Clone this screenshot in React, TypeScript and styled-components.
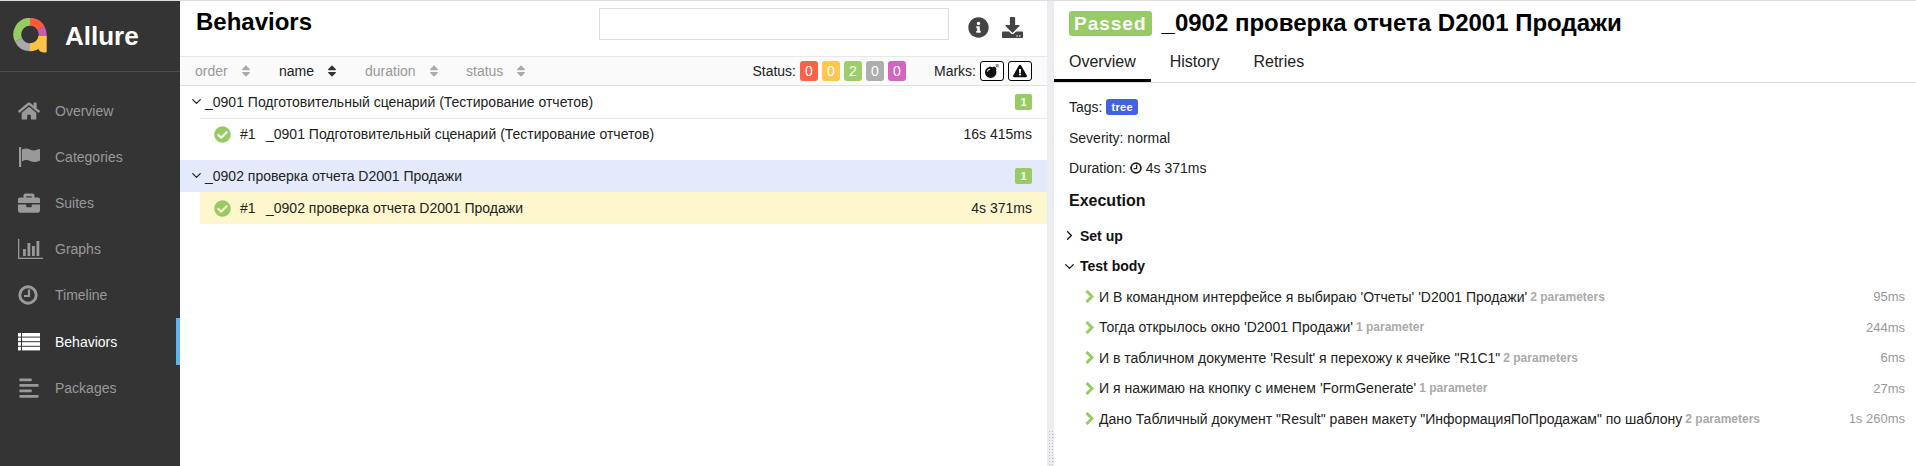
import React from "react";
import styled, { createGlobalStyle } from "styled-components";
import {
  FaHome,
  FaBriefcase,
  FaAlignLeft,
  FaCheckCircle,
  FaInfoCircle,
  FaDownload,
  FaBomb,
  FaExclamationTriangle,
  FaSort,
} from "react-icons/fa";
import { LuChevronDown, LuChevronRight } from "react-icons/lu";

const GlobalStyle = createGlobalStyle`
  html, body {
    margin: 0;
    padding: 0;
    background: #fff;
    font-family: "Liberation Sans", Arial, sans-serif;
    font-size: 14px;
    color: #222;
  }
`;

const Page = styled.div`
  display: flex;
  width: 1916px;
  height: 466px;
  overflow: hidden;
  border-top: 1px solid #ddd;
  box-sizing: border-box;
`;

const Sidebar = styled.nav`
  width: 180px;
  flex: none;
  background: #343434;
`;

const Brand = styled.div`
  display: flex;
  align-items: center;
  gap: 18px;
  height: 70px;
  padding-left: 13px;
  border-bottom: 1px solid #4d4d4d;
  margin-bottom: 15.5px;
  color: #fff;
  font-size: 26px;
  font-weight: 700;
`;

const NavItem = styled.div<{ $active?: boolean }>`
  display: flex;
  align-items: center;
  height: 46.2px;
  padding-left: 18px;
  box-sizing: border-box;
  color: ${(p) => (p.$active ? "#fff" : "#999")};
  border-right: 4px solid ${(p) => (p.$active ? "#5fb3f0" : "transparent")};
`;

const NavIcon = styled.span`
  display: flex;
  width: 37px;
  font-size: 22px;
`;

const Center = styled.main`
  width: 867px;
  flex: none;
`;

const CenterHead = styled.header`
  display: flex;
  align-items: flex-start;
  height: 55px;
  box-sizing: border-box;
  padding: 7px 0 0 16px;
`;

const PageTitle = styled.h2`
  margin: 0;
  width: 403px;
  font-size: 24px;
  line-height: 28px;
  font-weight: 700;
  color: #000;
`;

const Search = styled.input`
  width: 350px;
  height: 32px;
  box-sizing: border-box;
  border: 1px solid #ddd;
  background: #fff;
`;

const HeadIcons = styled.div`
  display: flex;
  gap: 13px;
  margin-left: 19px;
  padding-top: 9px;
  color: #444;
  font-size: 21px;
`;

const Toolbar = styled.div`
  display: flex;
  align-items: center;
  height: 30px;
  box-sizing: border-box;
  background: #fafafa;
  border-top: 1px solid #e8e8e8;
  border-bottom: 1px solid #e0e0e0;
  padding: 0 0 1px 15px;
`;

const SortLabel = styled.span<{ $width: number; $active?: boolean }>`
  display: flex;
  align-items: center;
  gap: 11px;
  width: ${(p) => p.$width}px;
  color: ${(p) => (p.$active ? "#222" : "#999")};
  svg {
    font-size: 14px;
    color: ${(p) => (p.$active ? "#333" : "#aaa")};
  }
`;

const StatusBlock = styled.div`
  display: flex;
  align-items: center;
  gap: 4px;
  margin-left: auto;
  margin-right: 28px;
`;

const Pill = styled.span<{ $color: string }>`
  width: 18px;
  height: 20px;
  border-radius: 3px;
  background: ${(p) => p.$color};
  color: #fff;
  opacity: 0.95;
  text-align: center;
  line-height: 20px;
`;

const MarkBlock = styled.div`
  display: flex;
  align-items: center;
  gap: 4px;
  margin-right: 15px;
`;

const MarkButton = styled.span`
  display: flex;
  align-items: center;
  justify-content: center;
  width: 22px;
  height: 18px;
  border: 1px solid #000;
  border-radius: 3px;
  background: #fff;
  color: #111;
  font-size: 14px;
`;

const GroupRow = styled.div<{ $selected?: boolean }>`
  display: flex;
  align-items: center;
  height: 32px;
  box-sizing: border-box;
  padding: 0 15px 1px 9px;
  background: ${(p) => (p.$selected ? "#e2eafb" : "#fff")};
`;

const Arrow = styled.span`
  display: flex;
  width: 16px;
  font-size: 15px;
  color: #222;
`;

const Count = styled.span`
  margin-left: auto;
  width: 17px;
  height: 16px;
  border-radius: 2px;
  background: #97cc64;
  color: #fff;
  font-size: 11px;
  font-weight: 700;
  line-height: 16px;
  text-align: center;
`;

const TestRow = styled.div<{ $selected?: boolean; $last?: boolean }>`
  display: flex;
  align-items: center;
  height: 32px;
  margin-left: 20px;
  padding: 0 15px 1px 14px;
  background: ${(p) => (p.$selected ? "#fef7cd" : "#fff")};
  border-top: 1px solid ${(p) => (p.$selected ? "#fef7cd" : "#e8e8e8")};
  margin-bottom: ${(p) => (p.$last ? "10px" : "0")};
  box-sizing: border-box;
`;

const CheckIcon = styled(FaCheckCircle)`
  font-size: 17px;
  color: #97cc64;
  margin-right: 9px;
`;

const RowIndex = styled.span`
  width: 26px;
`;

const RowTime = styled.span`
  margin-left: auto;
`;

const Splitter = styled.div`
  position: relative;
  width: 7px;
  flex: none;
  background: #ebedf0;
  &::after {
    content: "";
    position: absolute;
    left: 1px;
    top: 429px;
    width: 5px;
    height: 36px;
    background-image: radial-gradient(#bbb 1px, transparent 1px);
    background-size: 3px 3px;
  }
`;

const Detail = styled.section`
  flex: 1;
  min-width: 0;
`;

const DetailHead = styled.div`
  display: flex;
  align-items: center;
  gap: 10px;
  padding: 9px 15px 0;
  height: 26px;
`;

const PassedBadge = styled.span`
  height: 25px;
  padding: 0 5px;
  border-radius: 3px;
  background: #97cc64;
  color: #fff;
  font-size: 19px;
  font-weight: 700;
  letter-spacing: 1px;
  line-height: 25px;
`;

const DetailTitle = styled.h2`
  margin: 0;
  font-size: 24px;
  font-weight: 700;
  color: #000;
  white-space: nowrap;
`;

const Tabs = styled.div`
  display: flex;
  gap: 4px;
  margin-top: 9px;
  height: 38px;
  box-sizing: border-box;
  border-bottom: 1px solid #ddd;
`;

const Tab = styled.span<{ $active?: boolean }>`
  box-sizing: border-box;
  padding: 8px 15px 0;
  font-size: 16px;
  line-height: 18px;
  color: #222;
  height: 37px;
  border-bottom: 3px solid ${(p) => (p.$active ? "#000" : "transparent")};
`;

const DetailBody = styled.div`
  padding: 9px 11px 0 15px;
`;

const MetaLine = styled.div`
  display: flex;
  align-items: center;
  gap: 4px;
  height: 30.5px;
`;

const TagBadge = styled.span`
  height: 16px;
  padding: 0 5px;
  border-radius: 3px;
  background: #4263e0;
  color: #fff;
  font-size: 11px;
  font-weight: 700;
  letter-spacing: 0.3px;
  line-height: 16px;
`;

const SectionTitle = styled.h3`
  margin: 8px 0 11px;
  font-size: 16px;
  line-height: 18px;
  font-weight: 700;
  color: #111;
`;

const StageTitle = styled.div`
  display: flex;
  align-items: center;
  gap: 3px;
  height: 30.5px;
  margin-left: -7px;
  font-size: 14px;
  font-weight: 700;
  color: #111;
  svg {
    font-size: 15px;
  }
`;

const Step = styled.div`
  display: flex;
  align-items: center;
  height: 30.5px;
  padding-left: 16px;
`;

const StepArrowMark = styled.svg`
  flex: none;
  width: 9px;
  height: 13px;
  margin-right: 5px;
  color: #97cc64;
`;

const Params = styled.span`
  margin-left: 3px;
  font-size: 12px;
  font-weight: 700;
  color: #aaa;
`;

const StepTime = styled.span`
  margin-left: auto;
  font-size: 13px;
  color: #999;
`;

const Logo = () => (
  <svg width="34" height="36" viewBox="0 0 34 36" fill="none">
    <g strokeWidth="8">
      <path d="M17 3.8 A12.7 12.7 0 0 1 28 10.15" stroke="#fd5a3e" />
      <path d="M28 10.15 A12.7 12.7 0 0 1 29.5 18.7" stroke="#c95ab8" />
      <path d="M29.5 18.7 A12.7 12.7 0 0 1 17 29.2" stroke="#fdc344" />
      <path d="M17 29.2 A12.7 12.7 0 0 1 5.5 21.9" stroke="#aaa" />
      <path d="M5.5 21.9 A12.7 12.7 0 0 1 17 3.8" stroke="#97cc64" />
    </g>
    <path d="M25.6 18 H33.7 V33.5 q0 1 -1 1 h-1.5 q-4 0 -5.6 -3 z" fill="#fdc344" />
  </svg>
);

const FlagGlyph = () => (
  <svg width="23" height="20" viewBox="0 0 23 20" fill="currentColor">
    <rect x="1" y="0" width="2.2" height="20" />
    <path d="M4 2.5 q4 -2 8 0 t9 -0.5 q1 0 1 1 v10 q0 1 -1 1 q-5 2 -9 0 t-8 0.5 z" />
  </svg>
);

const BarsGlyph = () => (
  <svg width="25" height="20" viewBox="0 0 25 20" fill="currentColor">
    <rect x="0" y="0" width="1.3" height="20" />
    <rect x="0" y="18.7" width="25" height="1.3" />
    <rect x="5" y="10" width="2.8" height="7" />
    <rect x="9.5" y="4" width="2.8" height="13" />
    <rect x="14" y="7" width="2.8" height="10" />
    <rect x="18.5" y="2" width="2.8" height="15" />
  </svg>
);

const ClockGlyph = ({ size }: { size: number }) => (
  <svg width={size} height={size} viewBox="0 0 20 20" fill="none" stroke="currentColor" strokeWidth="3">
    <circle cx="10" cy="10" r="8.2" />
    <path d="M11 4.5 V11 H6" strokeWidth="2.2" />
  </svg>
);

const RowsGlyph = () => (
  <svg width="22" height="18" viewBox="0 0 22 18" fill="currentColor">
    {[0, 4.6, 9.2, 13.8].map((y) => (
      <React.Fragment key={y}>
        <rect x="0" y={y} width="3" height="3.6" />
        <rect x="4" y={y} width="18" height="3.6" />
      </React.Fragment>
    ))}
  </svg>
);

const StepArrow = () => (
  <StepArrowMark viewBox="0 0 9 13" fill="none" stroke="currentColor" strokeWidth="3">
    <path d="M1.5 1 L7 6.5 L1.5 12" />
  </StepArrowMark>
);

const navItems = [
  { label: "Overview", icon: <FaHome /> },
  { label: "Categories", icon: <FlagGlyph /> },
  { label: "Suites", icon: <FaBriefcase /> },
  { label: "Graphs", icon: <BarsGlyph /> },
  { label: "Timeline", icon: <ClockGlyph size={20} /> },
  { label: "Behaviors", icon: <RowsGlyph />, active: true },
  { label: "Packages", icon: <FaAlignLeft /> },
];

const statuses = [
  { color: "#fd5a3e", value: 0 },
  { color: "#ffc547", value: 0 },
  { color: "#97cc64", value: 2 },
  { color: "#aaaaaa", value: 0 },
  { color: "#d35ebe", value: 0 },
];

const steps = [
  { text: "И В командном интерфейсе я выбираю 'Отчеты' 'D2001 Продажи'", params: "2 parameters", time: "95ms" },
  { text: "Тогда открылось окно 'D2001 Продажи'", params: "1 parameter", time: "244ms" },
  { text: "И в табличном документе 'Result' я перехожу к ячейке \"R1C1\"", params: "2 parameters", time: "6ms" },
  { text: "И я нажимаю на кнопку с именем 'FormGenerate'", params: "1 parameter", time: "27ms" },
  { text: "Дано Табличный документ \"Result\" равен макету \"ИнформацияПоПродажам\" по шаблону", params: "2 parameters", time: "1s 260ms" },
];

const App: React.FC = () => (
  <>
    <GlobalStyle />
    <Page>
      <Sidebar>
        <Brand>
          <Logo />
          Allure
        </Brand>
        {navItems.map((item) => (
          <NavItem key={item.label} $active={item.active}>
            <NavIcon>{item.icon}</NavIcon>
            {item.label}
          </NavItem>
        ))}
      </Sidebar>

      <Center>
        <CenterHead>
          <PageTitle>Behaviors</PageTitle>
          <Search />
          <HeadIcons>
            <FaInfoCircle />
            <FaDownload />
          </HeadIcons>
        </CenterHead>
        <Toolbar>
          <SortLabel $width={84}>order <FaSort /></SortLabel>
          <SortLabel $width={86} $active>name <FaSort /></SortLabel>
          <SortLabel $width={101}>duration <FaSort /></SortLabel>
          <SortLabel $width={100}>status <FaSort /></SortLabel>
          <StatusBlock>
            Status:
            {statuses.map((s) => (
              <Pill key={s.color} $color={s.color}>{s.value}</Pill>
            ))}
          </StatusBlock>
          <MarkBlock>
            Marks:
            <MarkButton><FaBomb /></MarkButton>
            <MarkButton><FaExclamationTriangle /></MarkButton>
          </MarkBlock>
        </Toolbar>

        <GroupRow>
          <Arrow><LuChevronDown /></Arrow>
          _0901 Подготовительный сценарий (Тестирование отчетов)
          <Count>1</Count>
        </GroupRow>
        <TestRow $last>
          <CheckIcon />
          <RowIndex>#1</RowIndex>
          _0901 Подготовительный сценарий (Тестирование отчетов)
          <RowTime>16s 415ms</RowTime>
        </TestRow>
        <GroupRow $selected>
          <Arrow><LuChevronDown /></Arrow>
          _0902 проверка отчета D2001 Продажи
          <Count>1</Count>
        </GroupRow>
        <TestRow $selected>
          <CheckIcon />
          <RowIndex>#1</RowIndex>
          _0902 проверка отчета D2001 Продажи
          <RowTime>4s 371ms</RowTime>
        </TestRow>
      </Center>

      <Splitter />

      <Detail>
        <DetailHead>
          <PassedBadge>Passed</PassedBadge>
          <DetailTitle>_0902 проверка отчета D2001 Продажи</DetailTitle>
        </DetailHead>
        <Tabs>
          <Tab $active>Overview</Tab>
          <Tab>History</Tab>
          <Tab>Retries</Tab>
        </Tabs>
        <DetailBody>
          <MetaLine>Tags: <TagBadge>tree</TagBadge></MetaLine>
          <MetaLine>Severity: normal</MetaLine>
          <MetaLine>Duration: <ClockGlyph size={12} /> 4s 371ms</MetaLine>
          <SectionTitle>Execution</SectionTitle>
          <StageTitle><LuChevronRight /> Set up</StageTitle>
          <StageTitle><LuChevronDown /> Test body</StageTitle>
          {steps.map((step) => (
            <Step key={step.time}>
              <StepArrow />
              {step.text}
              <Params>{step.params}</Params>
              <StepTime>{step.time}</StepTime>
            </Step>
          ))}
        </DetailBody>
      </Detail>
    </Page>
  </>
);

export default App;
